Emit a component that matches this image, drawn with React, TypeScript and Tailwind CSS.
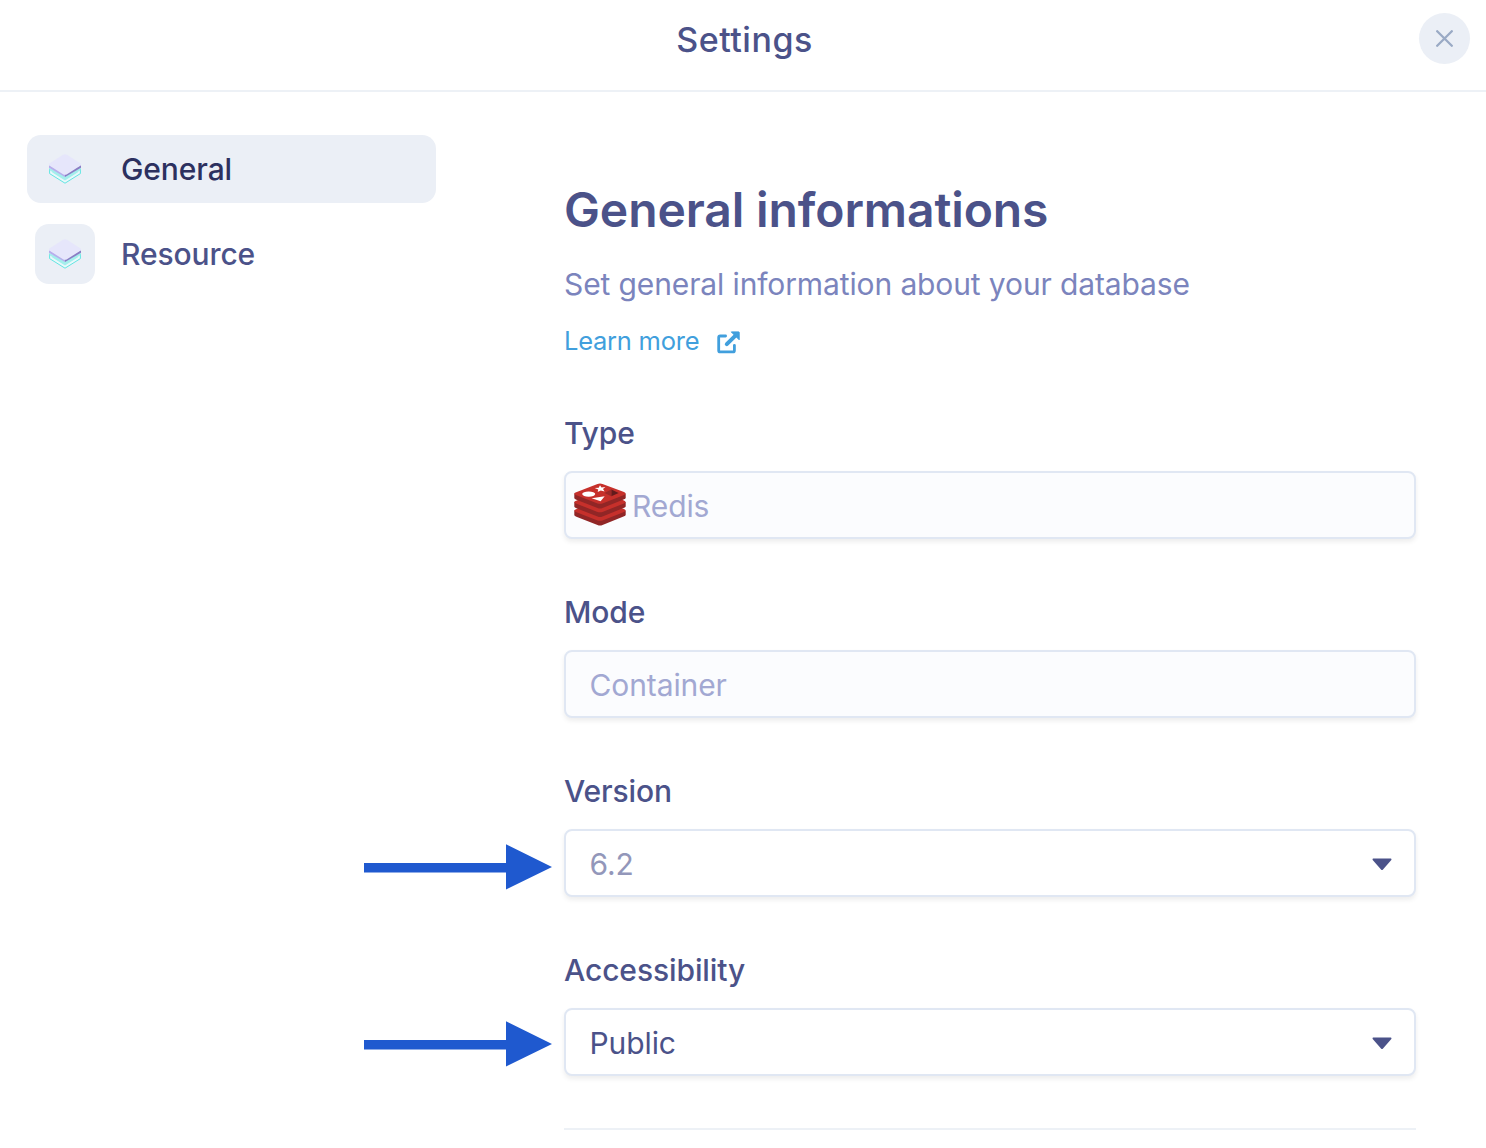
import type { ReactNode } from "react";

function LayersIcon() {
  return (
    <svg width="34" height="32" viewBox="0 0 34 32" fill="none" className="shrink-0">
      <path d="M1.6 15.5 V20.6 L17 30.2 L32.4 20.6 V15.5" fill="#e9f8fb" stroke="#62e6e2" strokeWidth="1" />
      <path d="M1.6 15 V17.2 L17 26.8 L32.4 17.2 V15 L17 23 Z" fill="#a4eeec" />
      <path d="M4 19.3 L8 17.3 L17 22.8 L26 17.3 L30 19.3 L17 27.6 Z" fill="#a4eeec" />
      <path d="M1 12.2 L17 20.6 V24 L1 14.8 Z" fill="#b7aeec" />
      <path d="M17 20.6 L33 12.2 V14.8 L17 24 Z" fill="#8a7dc4" />
      <path d="M15 1.8 Q17 .8 19 1.8 L32.2 10.3 Q33.8 11.5 32.2 12.8 L19 21.3 Q17 22.3 15 21.3 L1.8 12.8 Q.2 11.5 1.8 10.3 Z" fill="#e6e6fb" />
    </svg>
  );
}

function RedisIcon() {
  return (
    <svg width="52" height="44" viewBox="0 0 52 44" className="shrink-0">
      {[17, 8.5, 0].map((y) => (
        <g key={y} transform={`translate(0 ${y})`}>
          <path d="M.3 10.5 V15 C.3 15.7 1.4 16.2 3 16.9 L23.5 25.1 Q26 26.1 28.5 25.1 L49.5 16.6 Q51.7 15.7 51.7 14.9 V10.5 Z" fill="#912626" />
          <path d="M1.5 9.4 L23.5 1 Q26 .1 28.5 1 L50 9 Q53 10.4 50 11.9 L28.5 20.4 Q26 21.3 23.5 20.4 L1.9 12 Q-1 10.6 1.5 9.4 Z" fill="#c6302b" />
        </g>
      ))}
      <path d="M26 2.2 L27.5 4.4 L31.4 4.1 L29 6.1 L30.6 8.4 L26.8 7.4 L23.7 9 L24.2 6.5 L20.7 5.1 L24.7 4.7 Z" fill="#fff" />
      <ellipse cx="14.7" cy="11.1" rx="6.5" ry="2.6" fill="#fff" />
      <path d="M17.6 15.2 L30.7 13.2 L26.6 18.3 Z" fill="#fff" />
      <path d="M37.3 6.6 L44.7 9.9 L37.3 13.2 Z" fill="#621b1c" />
      <path d="M30.5 10 L37.3 6.6 V13.2 Z" fill="#9a2928" />
    </svg>
  );
}

function ExternalLinkIcon() {
  return (
    <svg width="23" height="23" viewBox="0 0 23 23" fill="none" className="mt-[1px] ml-[17.5px]">
      <path d="M8.6 5 H3.2 Q1.7 5 1.7 6.5 V19.4 Q1.7 20.9 3.2 20.9 H15.9 Q17.4 20.9 17.4 19.4 V14.3" stroke="#419fdd" strokeWidth="2.8" strokeLinecap="round" />
      <path d="M9.8 13.2 L19 4.1" stroke="#419fdd" strokeWidth="4" strokeLinecap="round" />
      <path d="M14.3 .9 H21.8 Q22.2 .9 22.2 1.3 V8.8 Z" fill="#419fdd" stroke="#419fdd" strokeLinejoin="round" />
    </svg>
  );
}

function Caret() {
  return (
    <svg width="20" height="13" viewBox="0 0 20 13" className="mt-[1px] mr-[22.5px] ml-auto">
      <path d="M1.2 .5 H18.8 Q20 .8 19.3 2 L11 11.4 Q10 12.4 9 11.4 L.7 2 Q0 .8 1.2 .5 Z" fill="#4b5289" />
    </svg>
  );
}

function Field({ label, tone, children }: { label: string; tone: string; children: ReactNode }) {
  return (
    <div className="mb-[41px] h-[138px]">
      <div className="h-[58px] text-[30px] leading-[40px] font-medium tracking-[-0.1px] text-[#4b5289]">{label}</div>
      <div className={`flex h-[68px] items-center rounded-[8px] border-2 border-[#e0e7f3] pt-[2px] text-[30px] tracking-[-0.1px] shadow-[0_3px_5px_rgba(0,0,0,0.07)] ${tone}`}>
        {children}
      </div>
    </div>
  );
}

function Arrow() {
  return (
    <svg width="188" height="46" viewBox="0 0 188 46">
      <path d="M0 19 H142 V0.3 L188 23 L142 45.5 V28.4 H0 Z" fill="#1f59cf" />
    </svg>
  );
}

export default function App() {
  return (
    <div className="flex h-[1148px] w-[1486px] flex-col overflow-hidden bg-white font-['Inter',sans-serif]">
      <header className="relative flex h-[92px] shrink-0 justify-center border-b-2 border-[#edf1f6] pt-[20px] pl-[3px]">
        <h1 className="text-[34px] leading-[40px] font-medium tracking-[0.5px] text-[#4b5289]">Settings</h1>
        <button className="absolute top-[13px] right-[16px] flex size-[51px] items-center justify-center rounded-full bg-[#ebeff6]" aria-label="Close">
          <svg width="17" height="17" viewBox="0 0 17 17" stroke="#9aaac5" strokeWidth="2.3" strokeLinecap="round">
            <path d="M1.2 1.2 L15.8 15.8 M15.8 1.2 L1.2 15.8" />
          </svg>
        </button>
      </header>
      <div className="flex min-h-0 flex-1">
        <aside className="relative w-[564px] shrink-0 pt-[43px] pl-[27px]">
          <nav className="flex w-[409px] flex-col">
            <a className="flex h-[68px] items-center rounded-[14px] bg-[#ebeff6] pl-[21px]">
              <LayersIcon />
              <span className="ml-[39px] text-[30px] font-medium tracking-[-0.1px] text-[#2c305f]">General</span>
            </a>
            <a className="mt-[21px] flex h-[60px] items-center pl-[8px]">
              <span className="flex size-[60px] items-center justify-center rounded-[14px] bg-[#ebeff6]">
                <LayersIcon />
              </span>
              <span className="ml-[26px] text-[30px] font-medium tracking-[-0.1px] text-[#4b5289]">Resource</span>
            </a>
          </nav>
          <div className="absolute top-[752px] left-[364px] flex flex-col gap-[131px]">
            <Arrow />
            <Arrow />
          </div>
        </aside>
        <main className="w-[852px] pt-[88px]">
          <h2 className="h-[84px] text-[48px] leading-[60px] font-semibold tracking-[-0.1px] text-[#4b5289]">General informations</h2>
          <p className="h-[56px] text-[30px] leading-[40px] tracking-[-0.12px] whitespace-nowrap text-[#7b84bd]">Set general information about your database</p>
          <a className="flex h-[93px] items-start pt-[1px] text-[25.5px] leading-[40px] tracking-[-0.25px] text-[#419fdd]">
            <span>Learn more</span>
            <span className="pt-[8.5px]"><ExternalLinkIcon /></span>
          </a>
          <Field label="Type" tone="bg-[#fbfcfe] text-[#a2a8d2]">
            <span className="mt-[-3px] mr-[6px] ml-[8px]"><RedisIcon /></span>
            Redis
          </Field>
          <Field label="Mode" tone="bg-[#fbfcfe] text-[#a2a8d2]">
            <span className="ml-[23.5px]">Container</span>
          </Field>
          <Field label="Version" tone="bg-white text-[#9397ba]">
            <span className="ml-[23.5px]">6.2</span>
            <Caret />
          </Field>
          <Field label="Accessibility" tone="bg-white text-[#4b5289]">
            <span className="ml-[23.5px]">Public</span>
            <Caret />
          </Field>
          <hr className="mt-[-1px] border-t-2 border-[#edf1f6]" />
        </main>
      </div>
    </div>
  );
}
